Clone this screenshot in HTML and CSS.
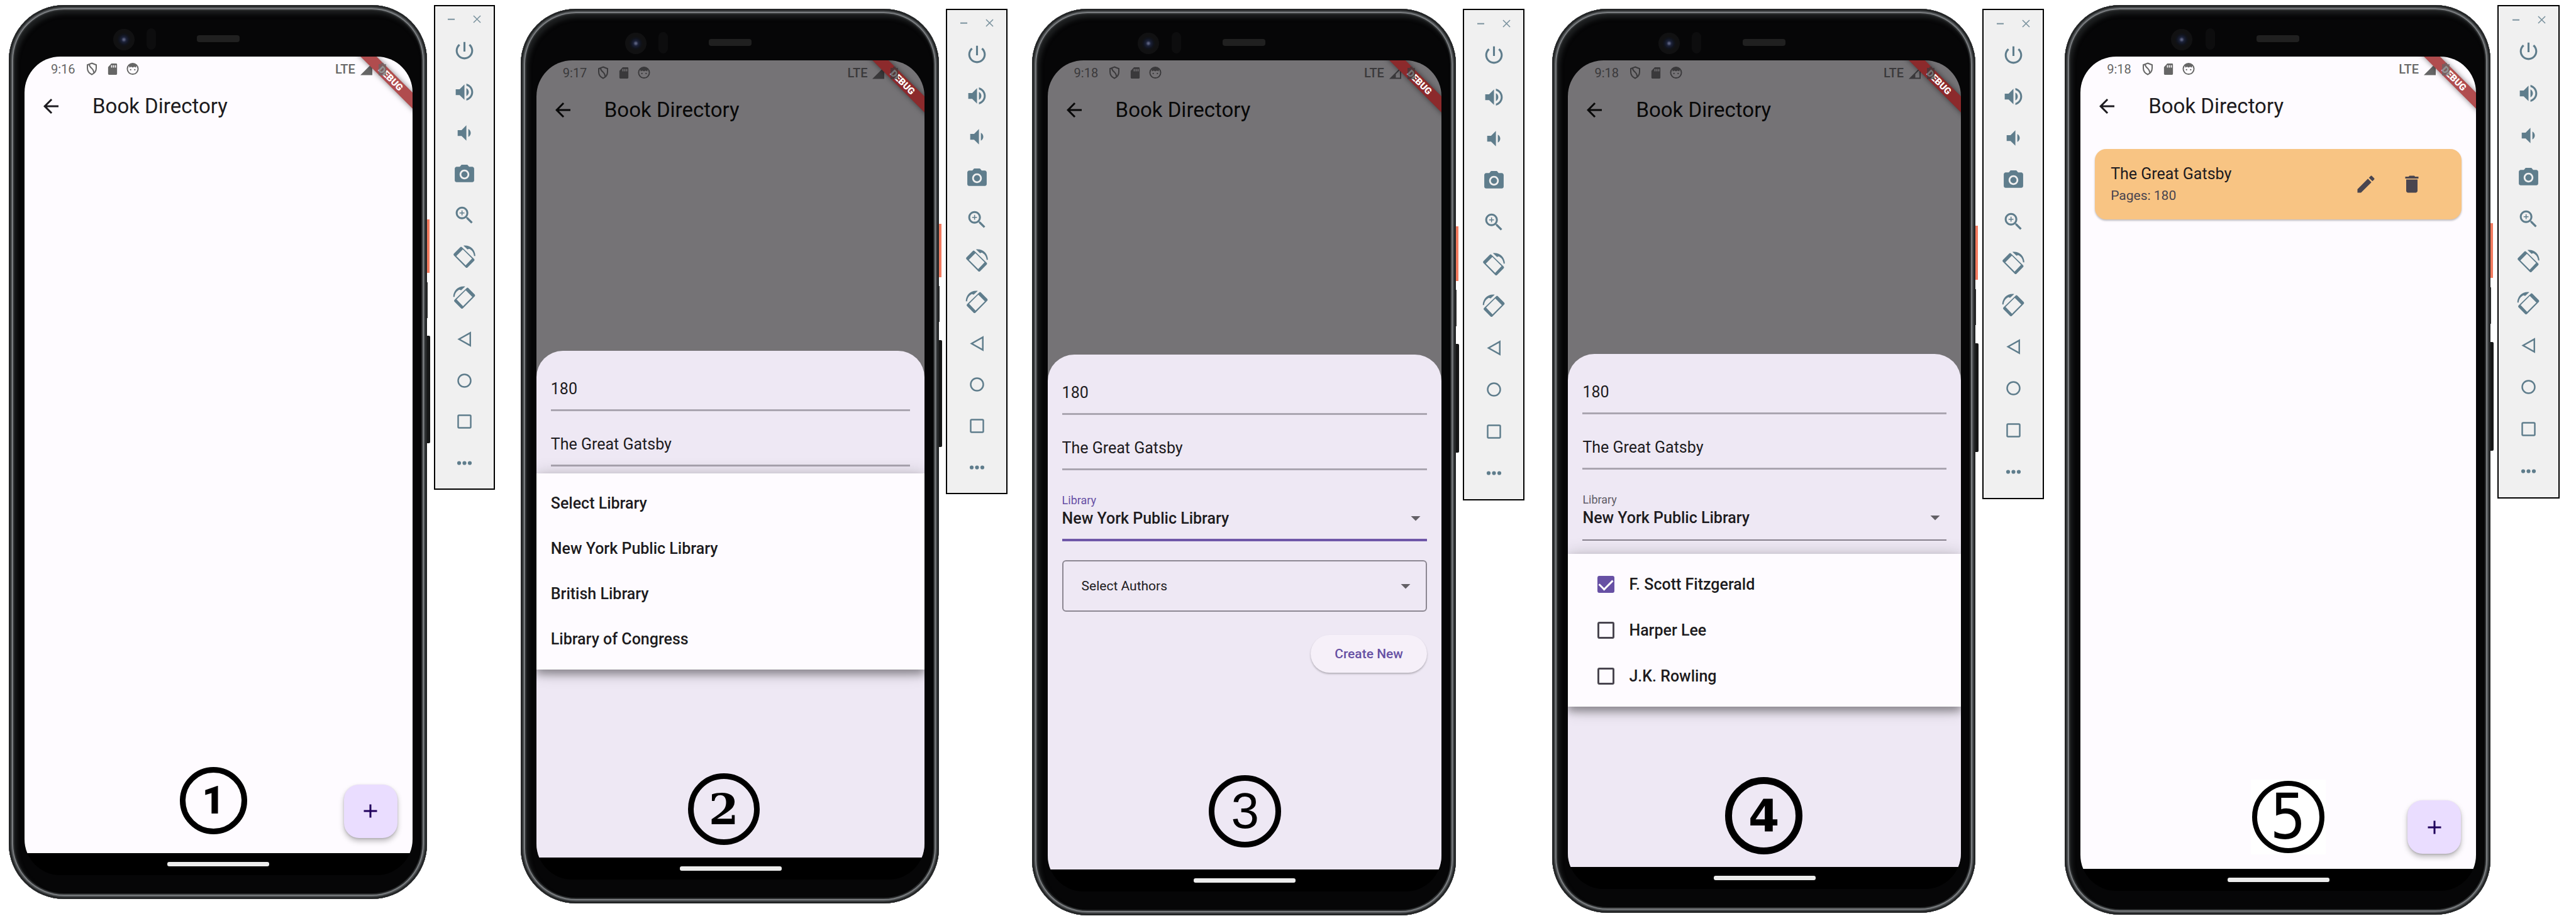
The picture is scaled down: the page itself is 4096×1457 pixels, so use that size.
FILE: index.html
```html
<!DOCTYPE html>
<html lang="en">
<head>
<meta charset="utf-8">
<title>Book Directory</title>
<link rel="stylesheet" href="styles.css">
</head>
<body>
<svg class="sprite" aria-hidden="true">
  <symbol id="power" viewBox="0 0 24 24"><path d="M13 3h-2v10h2V3zm4.83 2.17l-1.42 1.42C17.99 7.86 19 9.81 19 12c0 3.87-3.13 7-7 7s-7-3.13-7-7c0-2.19 1.01-4.14 2.58-5.42L6.17 5.17C4.23 6.82 3 9.26 3 12c0 4.97 4.03 9 9 9s9-4.03 9-9c0-2.74-1.23-5.18-3.17-6.83z"/></symbol>
  <symbol id="vol-up" viewBox="0 0 24 24"><path d="M3 9v6h4l5 5V4L7 9H3zm13.500 3c0-1.770-1.020-3.290-2.500-4.030v8.050c1.480-.730 2.500-2.250 2.500-4.020zM14 3.230v2.060c2.890.860 5 3.540 5 6.710s-2.110 5.850-5 6.710v2.060c4.010-.910 7-4.490 7-8.770s-2.990-7.860-7-8.770z"/></symbol>
  <symbol id="vol-down" viewBox="0 0 24 24"><path d="M18.500 12c0-1.770-1.020-3.290-2.500-4.030v8.050c1.480-.730 2.500-2.250 2.500-4.020zM5 9v6h4l5 5V4L9 9H5z"/></symbol>
  <symbol id="camera" viewBox="0 0 24 24"><circle cx="12" cy="12" r="3.2"/><path d="M9 2L7.170 4H4c-1.100 0-2 .9-2 2v12c0 1.100.9 2 2 2h16c1.100 0 2-.9 2-2V6c0-1.100-.9-2-2-2h-3.170L15 2H9zm3 15c-2.760 0-5-2.240-5-5s2.240-5 5-5 5 2.240 5 5-2.240 5-5 5z"/></symbol>
  <symbol id="zoom" viewBox="0 0 24 24"><path d="M15.500 14h-.79l-.28-.27C15.410 12.590 16 11.110 16 9.500 16 5.910 13.090 3 9.500 3S3 5.910 3 9.500 5.910 16 9.500 16c1.610 0 3.090-.59 4.230-1.570l.27.28v.79l5 4.990L20.490 19l-4.990-5zm-6 0C7.010 14 5 11.990 5 9.500S7.010 5 9.500 5 14 7.010 14 9.500 11.990 14 9.500 14zM12 10h-2v2H9v-2H7V9h2V7h1v2h2v1z"/></symbol>
  <symbol id="rot-left" viewBox="160 290 160 160"><path fill-rule="evenodd" d="M211 304q6-6 12 0l84 81q5 6 0 12l-46 46q-6 6-12 0l-82-83q-5-6 0-12zM229 319l-45 46 64 63 44-46z"/><path d="M233 293c46-6 82 27 82 72h-9c-2-24-14-41-34-50l-11 4z"/></symbol>
  <symbol id="rot-right" viewBox="160 290 160 160"><g transform="translate(478 0) scale(-1 1)"><path fill-rule="evenodd" d="M211 304q6-6 12 0l84 81q5 6 0 12l-46 46q-6 6-12 0l-82-83q-5-6 0-12zM229 319l-45 46 64 63 44-46z"/><path d="M233 293c46-6 82 27 82 72h-9c-2-24-14-41-34-50l-11 4z"/></g></symbol>
  <symbol id="back" viewBox="0 0 24 24"><path class="thin" d="M18 5.500v13L6.400 12z"/></symbol>
  <symbol id="home" viewBox="0 0 24 24"><circle class="thin" cx="12" cy="12" r="6.500"/></symbol>
  <symbol id="recents" viewBox="0 0 24 24"><rect class="thin" x="5.500" y="5.500" width="13" height="13" rx="1"/></symbol>
  <symbol id="more" viewBox="0 0 24 24"><circle cx="6.500" cy="12" r="2"/><circle cx="12" cy="12" r="2"/><circle cx="17.500" cy="12" r="2"/></symbol>
  <symbol id="min" viewBox="0 0 24 24"><path d="M5 11h14v2.500H5z"/></symbol>
  <symbol id="close" viewBox="0 0 24 24"><path class="line" d="M5 5l14 14M19 5L5 19"/></symbol>
  <symbol id="arrow" viewBox="0 0 24 24"><path d="M20 11H7.830l5.590-5.590L12 4l-8 8 8 8 1.410-1.410L7.830 13H20v-2z"/></symbol>
  <symbol id="drop" viewBox="0 0 24 24"><path d="M7 10l5 5 5-5z"/></symbol>
  <symbol id="plus" viewBox="0 0 24 24"><path d="M19 13h-6v6h-2v-6H5v-2h6V5h2v6h6v2z"/></symbol>
  <symbol id="edit" viewBox="0 0 24 24"><path d="M3 17.250V21h3.750L17.810 9.940l-3.750-3.750L3 17.250zM20.710 7.040c.39-.39.39-1.020 0-1.410l-2.340-2.340c-.39-.39-1.020-.39-1.410 0l-1.830 1.830 3.750 3.750 1.830-1.830z"/></symbol>
  <symbol id="trash" viewBox="0 0 24 24"><path d="M6 19c0 1.100.9 2 2 2h8c1.100 0 2-.9 2-2V7H6v12zM19 4h-3.500l-1-1h-5l-1 1H5v2h14V4z"/></symbol>
  <symbol id="shield" viewBox="0 0 18 21"><path class="line" d="M9 1.500l7 2.800v5c0 5-3 8.500-7 10.200-4-1.700-7-5.200-7-10.200v-5zM5 3.500c0 6 7.500 6 7 13"/></symbol>
  <symbol id="sd" viewBox="0 0 16 21"><path fill-rule="evenodd" d="M6 1h8q1.500 0 1.500 1.500v16q0 1.500-1.500 1.500H2q-1.500 0-1.500-1.500V7zM5.500 4v4h1.800V4zm3.200 0v4h1.800V4zm3.200 0v4h1.800V4z"/></symbol>
  <symbol id="face" viewBox="0 0 21 21"><circle class="line" cx="10.500" cy="10.500" r="9"/><path d="M4 4.500c4-4 9-4 13 0l-1 4-3-1.500-2.500 1.500L8 7 5 8.500z"/><circle cx="7" cy="12" r="1.200"/><circle cx="14" cy="12" r="1.200"/></symbol>
  <symbol id="signal" viewBox="0 0 20 20"><path d="M20 0v20H0z"/></symbol>
  <symbol id="signal-low" viewBox="0 0 20 20"><path fill-rule="evenodd" d="M20 0v20H0zM18 5v13h-7v-6z"/></symbol>
  <symbol id="battery" viewBox="0 0 12 20"><path d="M4 0h4v2h4v18H0V2h4z"/></symbol>
</svg>

<main class="stage">

  <section class="device">
    <div class="phone">
      <i class="camera"></i><i class="sensor"></i><i class="speaker"></i>
      <i class="side side-power"></i><i class="side side-gap"></i><i class="side side-volume"></i>
      <div class="display">
        <div class="app">
          <div class="status"><span>9:16</span><svg class="s-shield"><use href="#shield"/></svg><svg class="s-sd"><use href="#sd"/></svg><svg class="s-face"><use href="#face"/></svg><span class="lte">LTE</span><svg class="s-signal"><use href="#signal"/></svg><svg class="s-battery"><use href="#battery"/></svg></div>
          <header class="appbar"><button class="icon-btn" aria-label="Back"><svg><use href="#arrow"/></svg></button><h1>Book Directory</h1></header>
          <div class="debug">DEBUG</div>
          <button class="fab" aria-label="Add"><svg><use href="#plus"/></svg></button>
          <div class="step step-1">1</div>
        </div>
        <div class="navbar"><i></i></div>
      </div>
    </div>
    <aside class="panel">
      <div class="window"><button aria-label="Minimise"><svg><use href="#min"/></svg></button><button aria-label="Close"><svg><use href="#close"/></svg></button></div>
      <button aria-label="Power"><svg><use href="#power"/></svg></button>
      <button aria-label="Volume up"><svg><use href="#vol-up"/></svg></button>
      <button aria-label="Volume down"><svg><use href="#vol-down"/></svg></button>
      <button aria-label="Screenshot"><svg><use href="#camera"/></svg></button>
      <button aria-label="Zoom"><svg><use href="#zoom"/></svg></button>
      <button aria-label="Rotate left"><svg><use href="#rot-left"/></svg></button>
      <button aria-label="Rotate right"><svg><use href="#rot-right"/></svg></button>
      <button aria-label="Back"><svg><use href="#back"/></svg></button>
      <button aria-label="Home"><svg><use href="#home"/></svg></button>
      <button aria-label="Recents"><svg><use href="#recents"/></svg></button>
      <button aria-label="More"><svg><use href="#more"/></svg></button>
    </aside>
  </section>

  <section class="device device-low">
    <div class="phone">
      <i class="camera"></i><i class="sensor"></i><i class="speaker"></i>
      <i class="side side-power"></i><i class="side side-gap"></i><i class="side side-volume"></i>
      <div class="display">
        <div class="app app-dim">
          <div class="status"><span>9:17</span><svg class="s-shield"><use href="#shield"/></svg><svg class="s-sd"><use href="#sd"/></svg><svg class="s-face"><use href="#face"/></svg><span class="lte">LTE</span><svg class="s-signal"><use href="#signal"/></svg><svg class="s-battery"><use href="#battery"/></svg></div>
          <header class="appbar"><button class="icon-btn" aria-label="Back"><svg><use href="#arrow"/></svg></button><h1>Book Directory</h1></header>
          <div class="debug">DEBUG</div>
          <form class="sheet">
            <input class="field" type="text" aria-label="Pages" value="180">
            <input class="field" type="text" aria-label="Title" value="The Great Gatsby">
            <div class="menu menu-library">
              <button type="button">Select Library</button>
              <button type="button">New York Public Library</button>
              <button type="button">British Library</button>
              <button type="button">Library of Congress</button>
            </div>
          </form>
          <div class="step step-2">2</div>
        </div>
        <div class="navbar"><i></i></div>
      </div>
    </div>
    <aside class="panel">
      <div class="window"><button aria-label="Minimise"><svg><use href="#min"/></svg></button><button aria-label="Close"><svg><use href="#close"/></svg></button></div>
      <button aria-label="Power"><svg><use href="#power"/></svg></button>
      <button aria-label="Volume up"><svg><use href="#vol-up"/></svg></button>
      <button aria-label="Volume down"><svg><use href="#vol-down"/></svg></button>
      <button aria-label="Screenshot"><svg><use href="#camera"/></svg></button>
      <button aria-label="Zoom"><svg><use href="#zoom"/></svg></button>
      <button aria-label="Rotate left"><svg><use href="#rot-left"/></svg></button>
      <button aria-label="Rotate right"><svg><use href="#rot-right"/></svg></button>
      <button aria-label="Back"><svg><use href="#back"/></svg></button>
      <button aria-label="Home"><svg><use href="#home"/></svg></button>
      <button aria-label="Recents"><svg><use href="#recents"/></svg></button>
      <button aria-label="More"><svg><use href="#more"/></svg></button>
    </aside>
  </section>

  <section class="device device-low">
    <div class="phone">
      <i class="camera"></i><i class="sensor"></i><i class="speaker"></i>
      <i class="side side-power"></i><i class="side side-gap"></i><i class="side side-volume"></i>
      <div class="display">
        <div class="app app-dim">
          <div class="status"><span>9:18</span><svg class="s-shield"><use href="#shield"/></svg><svg class="s-sd"><use href="#sd"/></svg><svg class="s-face"><use href="#face"/></svg><span class="lte">LTE</span><svg class="s-signal"><use href="#signal-low"/></svg><svg class="s-battery"><use href="#battery"/></svg></div>
          <header class="appbar"><button class="icon-btn" aria-label="Back"><svg><use href="#arrow"/></svg></button><h1>Book Directory</h1></header>
          <div class="debug">DEBUG</div>
          <form class="sheet">
            <input class="field" type="text" aria-label="Pages" value="180">
            <input class="field" type="text" aria-label="Title" value="The Great Gatsby">
            <div class="library library-focus">
              <label for="library-3">Library</label>
              <div class="pick"><select id="library-3"><option>New York Public Library</option><option>British Library</option><option>Library of Congress</option></select><svg><use href="#drop"/></svg></div>
            </div>
            <div class="pick authors"><select aria-label="Authors"><option>Select Authors</option></select><svg><use href="#drop"/></svg></div>
            <button class="create" type="button">Create New</button>
          </form>
          <div class="step step-3">3</div>
        </div>
        <div class="navbar"><i></i></div>
      </div>
    </div>
    <aside class="panel">
      <div class="window"><button aria-label="Minimise"><svg><use href="#min"/></svg></button><button aria-label="Close"><svg><use href="#close"/></svg></button></div>
      <button aria-label="Power"><svg><use href="#power"/></svg></button>
      <button aria-label="Volume up"><svg><use href="#vol-up"/></svg></button>
      <button aria-label="Volume down"><svg><use href="#vol-down"/></svg></button>
      <button aria-label="Screenshot"><svg><use href="#camera"/></svg></button>
      <button aria-label="Zoom"><svg><use href="#zoom"/></svg></button>
      <button aria-label="Rotate left"><svg><use href="#rot-left"/></svg></button>
      <button aria-label="Rotate right"><svg><use href="#rot-right"/></svg></button>
      <button aria-label="Back"><svg><use href="#back"/></svg></button>
      <button aria-label="Home"><svg><use href="#home"/></svg></button>
      <button aria-label="Recents"><svg><use href="#recents"/></svg></button>
      <button aria-label="More"><svg><use href="#more"/></svg></button>
    </aside>
  </section>

  <section class="device device-low">
    <div class="phone">
      <i class="camera"></i><i class="sensor"></i><i class="speaker"></i>
      <i class="side side-power"></i><i class="side side-gap"></i><i class="side side-volume"></i>
      <div class="display">
        <div class="app app-dim">
          <div class="status"><span>9:18</span><svg class="s-shield"><use href="#shield"/></svg><svg class="s-sd"><use href="#sd"/></svg><svg class="s-face"><use href="#face"/></svg><span class="lte">LTE</span><svg class="s-signal"><use href="#signal-low"/></svg><svg class="s-battery"><use href="#battery"/></svg></div>
          <header class="appbar"><button class="icon-btn" aria-label="Back"><svg><use href="#arrow"/></svg></button><h1>Book Directory</h1></header>
          <div class="debug">DEBUG</div>
          <form class="sheet">
            <input class="field" type="text" aria-label="Pages" value="180">
            <input class="field" type="text" aria-label="Title" value="The Great Gatsby">
            <div class="library">
              <label for="library-4">Library</label>
              <div class="pick"><select id="library-4"><option>New York Public Library</option><option>British Library</option><option>Library of Congress</option></select><svg><use href="#drop"/></svg></div>
            </div>
            <div class="menu menu-authors">
              <label><input type="checkbox" checked>F. Scott Fitzgerald</label>
              <label><input type="checkbox">Harper Lee</label>
              <label><input type="checkbox">J.K. Rowling</label>
            </div>
          </form>
          <div class="step step-4">4</div>
        </div>
        <div class="navbar"><i></i></div>
      </div>
    </div>
    <aside class="panel">
      <div class="window"><button aria-label="Minimise"><svg><use href="#min"/></svg></button><button aria-label="Close"><svg><use href="#close"/></svg></button></div>
      <button aria-label="Power"><svg><use href="#power"/></svg></button>
      <button aria-label="Volume up"><svg><use href="#vol-up"/></svg></button>
      <button aria-label="Volume down"><svg><use href="#vol-down"/></svg></button>
      <button aria-label="Screenshot"><svg><use href="#camera"/></svg></button>
      <button aria-label="Zoom"><svg><use href="#zoom"/></svg></button>
      <button aria-label="Rotate left"><svg><use href="#rot-left"/></svg></button>
      <button aria-label="Rotate right"><svg><use href="#rot-right"/></svg></button>
      <button aria-label="Back"><svg><use href="#back"/></svg></button>
      <button aria-label="Home"><svg><use href="#home"/></svg></button>
      <button aria-label="Recents"><svg><use href="#recents"/></svg></button>
      <button aria-label="More"><svg><use href="#more"/></svg></button>
    </aside>
  </section>

  <section class="device">
    <div class="phone">
      <i class="camera"></i><i class="sensor"></i><i class="speaker"></i>
      <i class="side side-power"></i><i class="side side-gap"></i><i class="side side-volume"></i>
      <div class="display">
        <div class="app">
          <div class="status"><span>9:18</span><svg class="s-shield"><use href="#shield"/></svg><svg class="s-sd"><use href="#sd"/></svg><svg class="s-face"><use href="#face"/></svg><span class="lte">LTE</span><svg class="s-signal"><use href="#signal"/></svg><svg class="s-battery"><use href="#battery"/></svg></div>
          <header class="appbar"><button class="icon-btn" aria-label="Back"><svg><use href="#arrow"/></svg></button><h1>Book Directory</h1></header>
          <div class="debug">DEBUG</div>
          <article class="card">
            <div class="card-text"><h2>The Great Gatsby</h2><p>Pages: 180</p></div>
            <button class="icon-btn" aria-label="Edit"><svg><use href="#edit"/></svg></button>
            <button class="icon-btn" aria-label="Delete"><svg><use href="#trash"/></svg></button>
          </article>
          <button class="fab" aria-label="Add"><svg><use href="#plus"/></svg></button>
          <div class="step step-5"><span>5</span></div>
        </div>
        <div class="navbar"><i></i></div>
      </div>
    </div>
    <aside class="panel">
      <div class="window"><button aria-label="Minimise"><svg><use href="#min"/></svg></button><button aria-label="Close"><svg><use href="#close"/></svg></button></div>
      <button aria-label="Power"><svg><use href="#power"/></svg></button>
      <button aria-label="Volume up"><svg><use href="#vol-up"/></svg></button>
      <button aria-label="Volume down"><svg><use href="#vol-down"/></svg></button>
      <button aria-label="Screenshot"><svg><use href="#camera"/></svg></button>
      <button aria-label="Zoom"><svg><use href="#zoom"/></svg></button>
      <button aria-label="Rotate left"><svg><use href="#rot-left"/></svg></button>
      <button aria-label="Rotate right"><svg><use href="#rot-right"/></svg></button>
      <button aria-label="Back"><svg><use href="#back"/></svg></button>
      <button aria-label="Home"><svg><use href="#home"/></svg></button>
      <button aria-label="Recents"><svg><use href="#recents"/></svg></button>
      <button aria-label="More"><svg><use href="#more"/></svg></button>
    </aside>
  </section>

</main>
</body>
</html>
```
FILE: styles.css
```css
* { box-sizing: border-box; }

body {
  margin: 0;
  background: #fff;
  color: #1d1b20;
  font-family: Roboto, "Liberation Sans", sans-serif;
  font-size: 25px;
}

button, input, select { font: inherit; color: inherit; }
button { border: 0; padding: 0; background: none; }
h1, h2, p { margin: 0; font-weight: 400; }
svg { display: block; fill: currentColor; }
.line { fill: none; stroke: currentColor; stroke-width: 2; }
.thin { fill: none; stroke: currentColor; stroke-width: 1.6; }
.sprite { position: absolute; width: 0; height: 0; }

/* Five emulators side by side, separated by flexible gutters */
.stage {
  display: grid;
  grid-template-columns: 773fr 41fr 774fr 39fr 784fr 44fr 782fr 33fr 787fr;
  align-items: start;
  padding: 8px 26px 0 14px;
}
.device {
  display: grid;
  grid-template-columns: 665fr 11fr 97fr;
  align-items: start;
}
.device:nth-child(2) { grid-column: 3; }
.device:nth-child(3) { grid-column: 5; }
.device:nth-child(4) { grid-column: 7; }
.device:nth-child(5) { grid-column: 9; }
.device-low { margin-top: 6px; }

/* Phone body */
.phone {
  position: relative;
  display: flex;
  aspect-ratio: 665 / 1422;
  padding: 82px 23px 38px 25px;
  border-radius: 88px;
  background: #060607;
  box-shadow:
    inset 0 0 0 3px #242627,
    inset 0 0 0 5px #4a4d4f,
    inset 0 0 0 7px #7a7d80,
    inset 0 0 0 9px #2a2c2d,
    inset 4px 6px 6px 8px #1d1f20;
}
.camera, .sensor, .speaker, .side { position: absolute; }
.camera {
  left: 25%; top: 38px;
  width: 34px; height: 34px;
  border-radius: 50%;
  background: radial-gradient(circle, #5c6280 0 1px, #1b2138 4px, #10131c 8px, #111112 11px);
}
.sensor {
  left: 33%; top: 37px;
  width: 15px; height: 34px;
  border-radius: 8px;
  background: #0d0d0e;
}
.speaker {
  left: 45%; top: 48px;
  width: 68px; height: 11px;
  border-radius: 4px;
  background: #202020;
}
.side { left: 100%; }
.side-power { top: 24%; width: 4px; height: 6%; background: #f27a5e; }
.side-gap { top: 31%; width: 1px; height: 4%; background: #2c2d2d; }
.side-volume { top: 37%; width: 5px; height: 12%; border-radius: 0 2px 2px 0; background: #161717; }

.display {
  flex: 1;
  display: flex;
  flex-direction: column;
  overflow: hidden;
  border-radius: 57px;
  background: #000;
}
.app {
  position: relative;
  flex: 1;
  display: flex;
  flex-direction: column;
  overflow: hidden;
  background: #fefbff;
}
.app-dim { background: #757376; color: #080808; }
.navbar {
  display: flex;
  align-items: center;
  justify-content: center;
  height: 35px;
}
.navbar i { width: 162px; height: 7px; border-radius: 3px; background: #ececec; }

/* Status bar and app bar */
.status {
  display: flex;
  align-items: center;
  height: 36px;
  padding: 3px 42px 0;
  font-size: 20px;
  line-height: 24px;
  color: #666;
}
.app-dim .status { color: #3a393b; }
.s-shield { width: 18px; height: 21px; margin-left: 17px; }
.s-sd { width: 16px; height: 20px; margin-left: 16px; }
.s-face { width: 20px; height: 21px; margin-left: 14px; }
.lte { margin-left: auto; font-weight: 500; }
.s-signal { width: 19px; height: 20px; margin-left: 8px; }
.s-battery { width: 12px; height: 20px; margin-left: 10px; position: relative; z-index: 2; opacity: 0.7; }

.appbar {
  display: flex;
  align-items: center;
  gap: 48px;
  height: 86px;
  padding-left: 24px;
}
.appbar h1 { font-size: 33px; line-height: 42px; }
.icon-btn svg { width: 36px; height: 36px; }

.debug {
  position: absolute;
  top: 26px;
  right: -45px;
  width: 160px;
  height: 18px;
  transform: rotate(45deg);
  background: #b04c4e;
  box-shadow: 0 0 8px rgba(0, 0, 0, 0.5);
  color: #fff;
  font-size: 15px;
  font-weight: 900;
  line-height: 18px;
  text-align: center;
}
.app-dim .debug { background: #8c2a2c; }

/* Bottom sheet */
.sheet {
  position: absolute;
  inset: 36.4% 0 0;
  display: flex;
  flex-direction: column;
  padding: 8px 23px 0;
  border-radius: 42px 42px 0 0;
  background: #eee8f4;
  color: #1d1b20;
}
.field {
  flex: none;
  width: 100%;
  height: 88px;
  padding: 20px 0 0;
  border: 0;
  border-bottom: 3px solid #aaa5b0;
  border-radius: 0;
  background: none;
  outline: 0;
}
.library {
  flex: none;
  height: 113px;
  padding-top: 37px;
  border-bottom: 2px solid #86808c;
}
.library label { display: block; font-size: 18px; line-height: 21px; color: #605c66; }
.library-focus { border-bottom: 4px solid #6f57a8; }
.library-focus label { color: #6750a4; }

.pick { display: grid; align-items: center; }
.pick select, .pick svg { grid-area: 1 / 1; }
.pick select {
  width: 100%;
  height: 36px;
  padding: 0;
  border: 0;
  background: none;
  outline: 0;
  appearance: none;
  font-weight: 500;
}
.pick svg {
  justify-self: end;
  width: 36px;
  height: 36px;
  color: #636066;
  pointer-events: none;
}
.authors {
  flex: none;
  height: 82px;
  margin-top: 30px;
  padding: 0 14px 0 29px;
  border: 2px solid #8c8792;
  border-radius: 6px;
}
.authors select { font-size: 21px; font-weight: 400; }
.create {
  align-self: flex-end;
  height: 60px;
  margin-top: 37px;
  padding: 0 38px;
  border-radius: 30px;
  background: #f6f0f9;
  box-shadow: 0 2px 3px rgba(0, 0, 0, 0.25);
  color: #6750a4;
  font-size: 21px;
  font-weight: 500;
}

/* Drop-down menus over the sheet */
.menu {
  position: absolute;
  left: 0;
  right: 0;
  display: flex;
  flex-direction: column;
  padding: 12px 23px;
  background: #fefbff;
  box-shadow: 0 8px 12px rgba(0, 0, 0, 0.3), 0 3px 26px rgba(0, 0, 0, 0.24);
  font-weight: 500;
}
.menu-library { top: 195px; }
.menu-library button { height: 72px; text-align: left; }
.menu-authors { top: 318px; padding: 12px 46px; }
.menu-authors label { display: flex; align-items: center; gap: 23px; height: 73px; }
.menu-authors input {
  appearance: none;
  width: 27px;
  height: 27px;
  margin: 0 0 0 1px;
  border: 3px solid #49454f;
  border-radius: 3px;
}
.menu-authors input:checked {
  border-color: #6750a4;
  background: #6750a4;
  display: grid;
  place-items: center;
}
.menu-authors input:checked::before {
  content: "";
  width: 18px;
  height: 10px;
  margin-bottom: 5px;
  border: solid #fff;
  border-width: 0 0 3px 3px;
  transform: rotate(-45deg);
}

/* Book card */
.card {
  display: flex;
  align-items: center;
  gap: 37px;
  height: 112px;
  margin: 25px 23px;
  padding: 0 61px 0 25px;
  border-radius: 18px;
  background: #f8c483;
  box-shadow: 0 2px 3px rgba(0, 0, 0, 0.25);
}
.card-text { flex: 1; }
.card h2 { font-size: 25px; line-height: 36px; }
.card p { font-size: 21px; line-height: 32px; color: #49454f; }
.card .icon-btn { color: #49454f; }

.fab {
  position: absolute;
  right: 24px;
  bottom: 24px;
  display: grid;
  place-items: center;
  width: 85px;
  height: 85px;
  border-radius: 24px;
  background: #eaddff;
  box-shadow: 0 5px 8px rgba(0, 0, 0, 0.25), 0 1px 3px rgba(0, 0, 0, 0.15);
  color: #21005d;
}
.fab svg { width: 36px; height: 36px; }

/* Step numbers */
.step {
  position: absolute;
  display: grid;
  place-items: center;
  border: 9px solid #000;
  border-radius: 50%;
  color: #000;
  line-height: 1;
}
.step-1 { left: 40%; bottom: 30px; width: 107px; height: 107px; font: 900 62px/1 Roboto, sans-serif; }
.step-2 { left: 39%; bottom: 20px; width: 114px; height: 114px; font: bold 68px/1 "DejaVu Serif", serif; }
.step-3 { left: 41%; bottom: 35px; width: 115px; height: 115px; font: 80px/1 "Liberation Sans", sans-serif; }
.step-4 { left: 40%; bottom: 20px; width: 123px; height: 123px; border-width: 11px; font: bold 71px/1 "DejaVu Sans", sans-serif; }
.step-5 {
  left: 43%;
  bottom: 23px;
  width: 119px;
  height: 119px;
  border: 0;
  border-radius: 0;
  background: #fff;
  font: 100px/1 "DejaVu Sans Condensed", "Noto Sans", sans-serif;
}
.step-5 span {
  display: grid;
  place-items: center;
  width: 115px;
  height: 115px;
  border: 8px solid #000;
  border-radius: 50%;
}

/* Emulator tool strip */
.panel {
  grid-column: 3;
  display: flex;
  flex-direction: column;
  aspect-ratio: 97 / 771;
  padding-bottom: 8px;
  border: 2px solid #000;
  background: #f0f0f0;
  color: #5f7d8c;
}
.panel > button { flex: 66; display: grid; place-items: center; }
.panel svg { width: 37px; height: 37px; }
.window { flex: 34; display: flex; align-items: center; justify-content: center; gap: 22px; padding-top: 4px; }
.window svg { width: 19px; height: 19px; color: #7a929e; }
```
